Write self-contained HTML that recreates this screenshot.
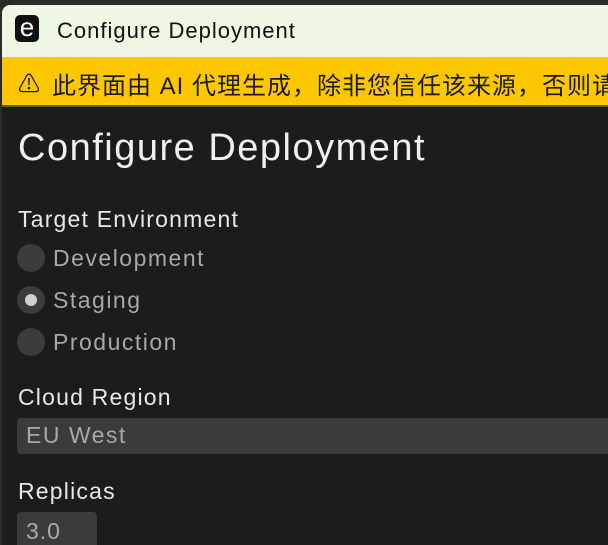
<!DOCTYPE html>
<html><head><meta charset="utf-8"><style>
html,body{margin:0;padding:0;width:608px;height:540px;overflow:hidden;background:#2b2b2b;font-family:"Liberation Sans","Noto Sans CJK SC",sans-serif;}
.win{position:absolute;left:2px;top:5px;width:620px;height:540px;background:#1c1c1c;border-top-left-radius:8px;overflow:hidden;}
.title{position:absolute;left:0;top:0;width:100%;height:52px;background:#edf7e3;}
.icon{position:absolute;left:13px;top:10px;width:24px;height:27px;background:#111;border-radius:5px;color:#fff;font-size:26px;line-height:24px;text-align:center;}
.ttext{position:absolute;left:55px;top:13px;font-size:22px;color:#111;letter-spacing:1px;}
.banner{position:absolute;left:0;top:52px;width:100%;height:48px;background:#fdc700;border-bottom:2px solid #6b5a20;}
.warn{position:absolute;left:16px;top:10px;font-size:22px;color:#1a1a1a;}
.btext{position:absolute;left:50px;top:9px;font-size:24px;color:#1a1a1a;white-space:nowrap;letter-spacing:1px;}
.content{position:absolute;left:0;top:102px;width:100%;bottom:0;background:#1c1c1c;}
h1{position:absolute;left:16px;top:20px;margin:0;font-weight:normal;font-size:38px;color:#f0f0f0;letter-spacing:1.5px;}
.lbl{position:absolute;left:16px;font-size:23px;color:#e8e8e8;letter-spacing:1.2px;}
.radio{position:absolute;left:15px;width:28px;height:28px;border-radius:50%;background:#3c3c3c;}
.radio.on::after{content:"";position:absolute;left:8px;top:8px;width:12px;height:12px;border-radius:50%;background:#d0d0d0;}
.rt{position:absolute;left:51px;font-size:23px;color:#a8a8a8;letter-spacing:1.5px;}
.input{position:absolute;left:15px;top:311px;width:620px;height:36px;background:#3b3b3b;border-radius:4px;}
.input span{position:absolute;left:9px;top:4px;font-size:23px;color:#a8a8a8;letter-spacing:1.5px;}
.num{position:absolute;left:15px;top:405px;width:80px;height:40px;background:#3b3b3b;border-radius:4px;}
.num span{position:absolute;left:9px;top:6px;font-size:23px;color:#a8a8a8;letter-spacing:1px;}
</style></head><body>
<div class="win">
 <div class="title"><div class="icon">e</div><div class="ttext">Configure Deployment</div></div>
 <div class="banner"><div class="warn">⚠</div><div class="btext">此界面由 AI 代理生成，除非您信任该来源，否则请</div></div>
 <div class="content">
  <h1>Configure Deployment</h1>
  <div class="lbl" style="top:99px">Target Environment</div>
  <div class="radio" style="top:137px"></div><div class="rt" style="top:138px">Development</div>
  <div class="radio on" style="top:179px"></div><div class="rt" style="top:180px">Staging</div>
  <div class="radio" style="top:221px"></div><div class="rt" style="top:222px">Production</div>
  <div class="lbl" style="top:277px">Cloud Region</div>
  <div class="input"><span>EU West</span></div>
  <div class="lbl" style="top:371px">Replicas</div>
  <div class="num"><span>3.0</span></div>
 </div>
</div>
</body></html>
